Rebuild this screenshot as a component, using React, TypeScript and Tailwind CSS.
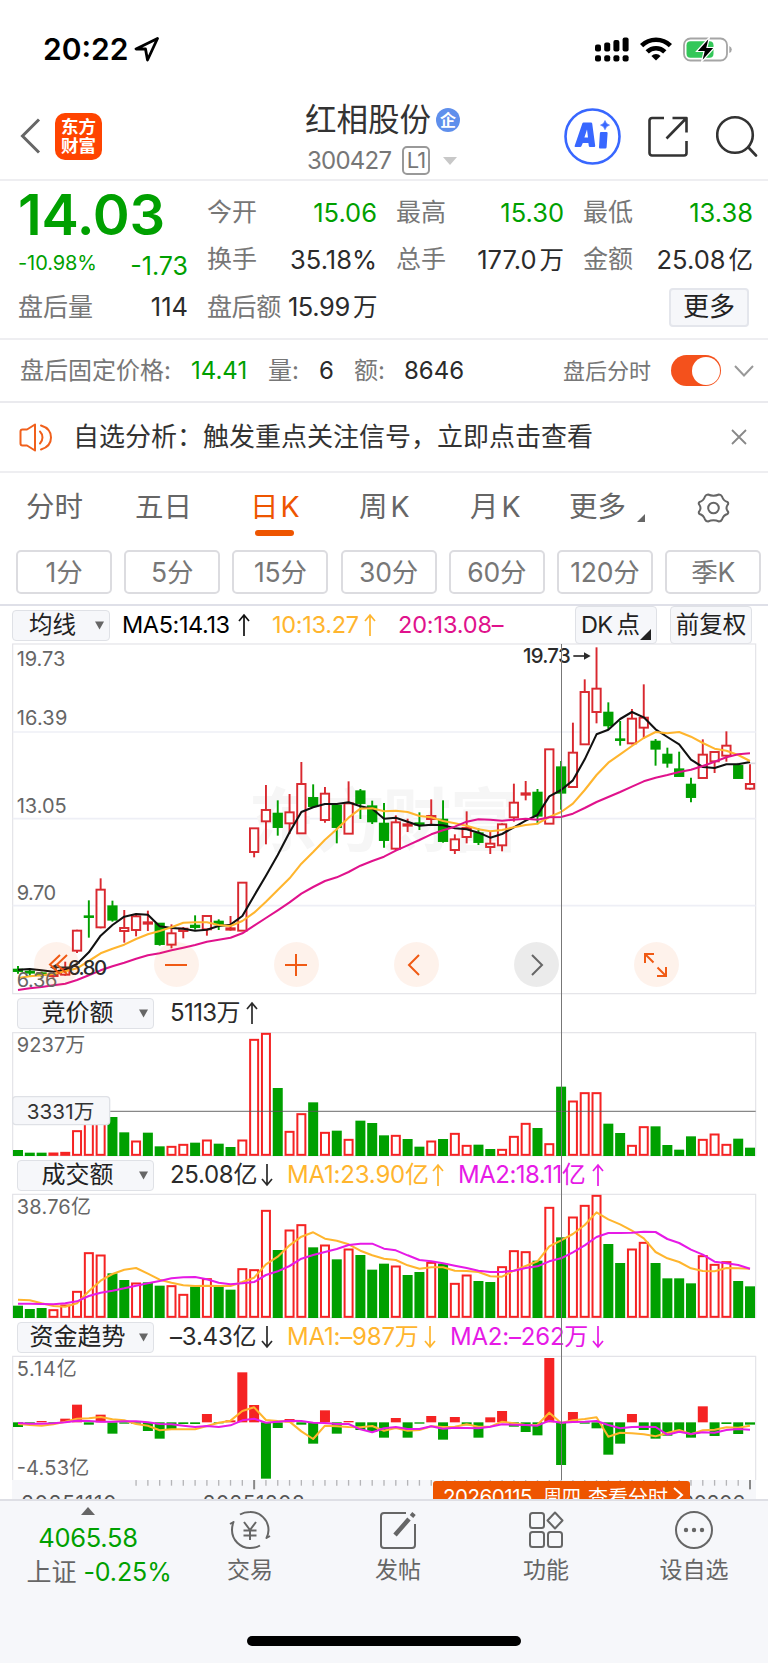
import React from "react";

const GREEN = "#00a000";
const CANDLE_RED = "#d9282f";
const BAR_RED = "#f52323";
const YELLOW = "#ffb52e";
const PINK = "#e0128c";
const MAGENTA = "#e61ae6";

// chart units are thirds of a pixel
const STEP = 35.42;
const xAt = (i: number) => 54 + i * STEP;

type Dir = "r" | "g";
// direction, body top, body bottom, high, low
type Candle = [Dir, number, number, number, number];

const candles: Candle[] = [
  ["g", 1003, 1009, 993, 1016], ["g", 1009, 1014, 1002, 1022], ["g", 1014, 1020, 1010, 1027],
  ["r", 1018, 1024, 1010, 1028], ["r", 1001, 1020, 980, 1022], ["r", 886, 948, 884, 954],
  ["g", 843, 847, 796, 908], ["r", 763, 878, 730, 880], ["g", 813, 855, 797, 860],
  ["r", 878, 889, 825, 923], ["r", 843, 886, 840, 904], ["r", 861, 867, 827, 888],
  ["g", 865, 928, 864, 932], ["r", 894, 930, 868, 940], ["r", 880, 889, 876, 910],
  ["g", 871, 877, 841, 884], ["r", 842, 884, 842, 902], ["g", 859, 869, 853, 885],
  ["r", 879, 885, 843, 887], ["r", 742, 888, 742, 888], ["r", 579, 652, 579, 667],
  ["r", 524, 560, 450, 628], ["g", 535, 577, 496, 602], ["r", 531, 566, 477, 597],
  ["r", 446, 596, 381, 596], ["g", 488, 514, 448, 516], ["r", 475, 556, 456, 563],
  ["g", 511, 577, 509, 625], ["r", 504, 597, 439, 597], ["g", 468, 505, 462, 552],
  ["g", 513, 560, 497, 567], ["g", 565, 616, 504, 638], ["r", 561, 642, 541, 648],
  ["r", 567, 573, 551, 591], ["g", 564, 570, 532, 585], ["r", 542, 553, 493, 568],
  ["g", 553, 619, 496, 623], ["r", 612, 646, 598, 657], ["r", 578, 607, 529, 625],
  ["g", 594, 622, 580, 630], ["r", 625, 637, 590, 657], ["r", 567, 632, 565, 649],
  ["r", 502, 548, 446, 560], ["r", 474, 480, 438, 496], ["g", 472, 543, 462, 568],
  ["r", 342, 567, 342, 567], ["g", 396, 474, 378, 524], ["r", 352, 457, 263, 458],
  ["r", 170, 329, 133, 330], ["r", 160, 232, 37, 265], ["g", 232, 272, 202, 282],
  ["g", 312, 316, 258, 332], ["r", 250, 326, 222, 328], ["r", 247, 279, 148, 311],
  ["g", 319, 342, 312, 392], ["g", 358, 384, 338, 398], ["g", 402, 424, 350, 425],
  ["g", 448, 487, 428, 502], ["r", 358, 430, 313, 430], ["r", 350, 380, 350, 414],
  ["r", 331, 363, 289, 380], ["g", 392, 430, 386, 431], ["r", 446, 462, 388, 464],
];

const ma5 = [
  1004, 1002, 1006, 1010, 1004, 987, 952, 902, 870, 845, 837, 839, 874, 879, 881, 887, 884, 873, 869,
  843, 782, 722, 660, 592, 531, 517, 507, 507, 502, 514, 521, 551, 548, 560, 572, 569, 571, 580, 583,
  593, 608, 597, 577, 557, 540, 484, 465, 436, 373, 298, 284, 252, 231, 247, 283, 306, 328, 374, 396,
  399, 388, 388, 381,
];
const ma10 = [
  1029, 1024, 1021, 1017, 1009, 1000, 978, 955, 941, 929, 912, 898, 888, 877, 863, 862, 862, 870, 873,
  858, 833, 800, 765, 730, 686, 651, 614, 583, 548, 521, 520, 529, 527, 531, 543, 547, 558, 565, 572,
  583, 589, 585, 577, 570, 566, 546, 531, 506, 465, 420, 383, 358, 333, 309, 291, 295, 291, 305, 324,
  341, 347, 360, 378,
];
const ma20 = [
  1065, 1060, 1056, 1051, 1046, 1035, 1021, 1006, 994, 983, 971, 961, 955, 946, 938, 930, 920, 914, 908,
  895, 872, 849, 826, 802, 776, 756, 738, 727, 711, 692, 678, 665, 647, 631, 615, 598, 586, 575, 560,
  553, 554, 557, 554, 551, 554, 547, 546, 536, 519, 501, 486, 471, 455, 439, 428, 420, 411, 404, 393,
  380, 367, 358, 355,
];

const dirs = "gggrrrrrggrggrrgrggrrrgrrgrgrggg" + "rggrgrrggrrrgrgrrrggrrggggrrrgg";

const auction = [
  481, 489, 489, 489, 487, 422, 370, 350, 382, 428, 453, 429, 470, 469, 463, 459, 450, 462, 472, 450, 148,
  130, 295, 424, 371, 338, 427, 423, 448, 393, 400, 437, 436, 448, 471, 453, 448, 430, 466, 465, 478, 478,
  439, 400, 415, 461, 291, 333, 308, 308, 402, 430, 466, 410, 410, 466, 480, 440, 448, 432, 463, 447, 474,
];

const turnover = [
  948, 958, 955, 959, 945, 904, 788, 795, 851, 871, 879, 878, 888, 887, 913, 891, 866, 891, 900, 836, 839,
  661, 781, 720, 704, 773, 765, 809, 777, 796, 840, 822, 828, 856, 847, 817, 822, 880, 855, 874, 877, 830,
  782, 785, 813, 652, 743, 681, 646, 616, 763, 820, 777, 757, 820, 866, 866, 881, 797, 823, 815, 874, 890,
];
const turnoverMa1 = [
  929, 931, 940, 948, 950, 940, 904, 872, 852, 839, 834, 851, 869, 878, 886, 888, 887, 888, 888, 876, 863,
  823, 800, 766, 740, 727, 746, 752, 763, 782, 796, 806, 810, 826, 836, 832, 832, 842, 843, 846, 859, 860,
  842, 828, 814, 769, 751, 732, 705, 667, 688, 703, 722, 745, 786, 805, 816, 835, 843, 844, 834, 835, 836,
];
const turnoverMa2 = [
  941, 941, 942, 943, 940, 934, 918, 908, 902, 895, 887, 880, 873, 865, 862, 861, 868, 878, 883, 880, 876,
  855, 844, 828, 806, 795, 786, 777, 765, 761, 761, 776, 781, 796, 810, 814, 820, 827, 834, 842, 846, 846,
  842, 834, 829, 814, 805, 787, 766, 741, 729, 729, 728, 725, 726, 747, 759, 779, 794, 815, 820, 825, 836,
];

const ZERO = 307;
const flow = [
  321, 310, 303, 310, 296, 254, 314, 284, 341, 311, 311, 333, 356, 328, 312, 312, 282, 310, 301, 157, 255,
  476, 324, 297, 314, 371, 271, 341, 303, 330, 335, 353, 294, 353, 311, 288, 359, 291, 316, 353, 292, 273,
  320, 336, 346, 114, 435, 276, 311, 325, 404, 371, 282, 330, 356, 347, 335, 353, 259, 348, 312, 342, 314,
];
const flowMa1 = [
  312, 315, 317, 313, 305, 296, 295, 291, 298, 301, 312, 317, 331, 328, 328, 328, 318, 308, 302, 273, 262,
  300, 303, 305, 334, 357, 317, 319, 321, 322, 318, 332, 324, 332, 330, 319, 321, 320, 313, 320, 320, 305,
  310, 315, 314, 278, 309, 301, 297, 292, 350, 338, 340, 343, 349, 339, 330, 343, 331, 329, 322, 323, 317,
];
const flowMa2 = [
  309, 311, 311, 310, 307, 302, 303, 305, 305, 304, 304, 307, 312, 313, 317, 321, 318, 321, 316, 301, 296,
  308, 305, 302, 303, 308, 309, 312, 312, 328, 337, 325, 321, 327, 327, 319, 326, 323, 324, 325, 320, 313,
  314, 315, 317, 302, 308, 306, 305, 303, 315, 325, 321, 320, 321, 344, 335, 342, 337, 338, 330, 327, 329,
];

const Line = ({ data, color }: { data: number[]; color: string }) => (
  <polyline
    points={data.map((y, i) => `${xAt(i).toFixed(1)},${y}`).join(" ")}
    fill="none"
    stroke={color}
    strokeWidth={6.2}
    strokeLinejoin="round"
  />
);

const Label = ({ x = 50, y, w, children, color = "#666" }: { x?: number; y: number; w: number; children: string; color?: string }) => (
  <text x={x} y={y} textLength={w} fontSize={60} fill={color}>
    {children}
  </text>
);

function Bars({ data, base }: { data: number[]; base: number }) {
  return (
    <g>
      {data.map((y, i) =>
        dirs[i] === "g" ? (
          <rect key={i} x={xAt(i) - 15} y={y - 1} width={30} height={base - y + 2} fill={GREEN} />
        ) : (
          <rect
            key={i}
            x={xAt(i) - 12}
            y={y + 1.5}
            width={24}
            height={Math.max(base - y - 4, 3)}
            fill="#fff"
            stroke={BAR_RED}
            strokeWidth={6}
          />
        )
      )}
    </g>
  );
}

const Frame = ({ y, h }: { y: number; h: number }) => (
  <rect x={38} y={y} width={2229} height={h} fill="none" stroke="#e3e3e8" strokeWidth={3.5} />
);

function Plot({ top, height, children }: { top: number; height: number; children: React.ReactNode }) {
  return (
    <svg
      width={768}
      height={height}
      viewBox={`0 ${top} 2304 ${height * 3}`}
      className="block shrink-0 overflow-visible"
    >
      {children}
    </svg>
  );
}

function PriceChart() {
  return (
    <Plot top={27} height={350}>
      <Frame y={27} h={1049} />
      {[291, 551, 812].map((y) => (
        <line key={y} x1={38} x2={2267} y1={y} y2={y} stroke="#eeeff6" strokeWidth={5} />
      ))}
      <text
        x={745}
        y={634}
        textLength={812}
        fontSize={208}
        fontWeight={700}
        fill="#f6f6f6"
      >
        东方财富
      </text>
      <line x1={2210} x2={2267} y1={385} y2={385} stroke="#dcdce2" strokeWidth={5} />
      <Label y={92} w={146}>19.73</Label>
      <Label y={270} w={152}>16.39</Label>
      <Label y={533} w={150}>13.05</Label>
      <Label y={795} w={118}>9.70</Label>
      {candles.map(([d, top, bottom, high, low], i) => {
        const x = xAt(i);
        const color = d === "g" ? GREEN : CANDLE_RED;
        return (
          <g key={i} stroke={color} strokeWidth={5.8}>
            <line x1={x} x2={x} y1={high} y2={top} />
            <line x1={x} x2={x} y1={bottom} y2={low} />
            <rect
              x={x - 12.5}
              y={top + 1}
              width={25}
              height={Math.max(bottom - top - 2, 1)}
              fill={d === "g" ? GREEN : "#fff"}
            />
          </g>
        );
      })}
      <Line data={ma5} color="#111" />
      <Line data={ma10} color={YELLOW} />
      <Line data={ma20} color={PINK} />
      <Label y={1056} w={122}>6.36</Label>
      <g fill="#2b2b2b" stroke="none" fontWeight={500}>
        <text x={1569} y={84} textLength={143} fontSize={61}>19.73</text>
        <text x={204} y={1019} textLength={117} fontSize={61}>6.80</text>
        <path d="M1720 63h38" stroke="#2b2b2b" strokeWidth={5} />
        <path d="M1752 52l20 11-20 11z" />
        <path d="M165 997h42" stroke="#2b2b2b" strokeWidth={5} />
        <path d="M170 986l-20 11 20 11z" />
      </g>
    </Plot>
  );
}

function AuctionChart() {
  return (
    <Plot top={126} height={124}>
      <Frame y={128} h={369} />
      <Label y={186} w={206}>9237万</Label>
      <Bars data={auction} base={497} />
      <line x1={38} x2={2267} y1={364} y2={364} stroke="#555" strokeOpacity={0.7} strokeWidth={4} />
      <rect x={38} y={320} width={291} height={84} rx={10} fill="#f6f7fa" stroke="#dfe1e6" strokeWidth={4} />
      <text x={80} y={386} textLength={203} fontSize={62} fill="#333">3331万</text>
    </Plot>
  );
}

function TurnoverChart() {
  return (
    <Plot top={612} height={124}>
      <Frame y={613} h={370} />
      <Label y={672} w={223}>38.76亿</Label>
      <Bars data={turnover} base={983} />
      <Line data={turnoverMa1} color={YELLOW} />
      <Line data={turnoverMa2} color={MAGENTA} />
    </Plot>
  );
}

function FlowChart() {
  return (
    <Plot top={108} height={124}>
      <path d="M38 480V109H2267V480" fill="none" stroke="#e3e3e8" strokeWidth={3.5} />
      <Label y={169} w={180}>5.14亿</Label>
      <Label y={466} w={218}>-4.53亿</Label>
      {flow.map((y, i) => (
        <rect
          key={i}
          x={xAt(i) - 15}
          y={Math.min(y, ZERO)}
          width={30}
          height={Math.max(Math.abs(y - ZERO), 3)}
          fill={y < ZERO ? BAR_RED : GREEN}
        />
      ))}
      <Line data={flowMa1} color={YELLOW} />
      <Line data={flowMa2} color={MAGENTA} />
    </Plot>
  );
}

function TimeAxis() {
  const ticks = Array.from({ length: 53 }, (_, k) => k + 10);
  return (
    <div className="relative h-[19px] overflow-hidden">
      <svg width={768} height={19} viewBox="0 0 2304 57" className="block">
        <rect x={36} y={0} width={2232} height={57} fill="#f6f7fa" />
        {ticks.map((i) => {
          const major = i === 20 || i === 62;
          return (
            <line
              key={i}
              x1={xAt(i)}
              x2={xAt(i)}
              y1={0}
              y2={major ? 28 : 17}
              stroke={major ? "#888" : "#b5b5b8"}
              strokeWidth={major ? 6 : 4}
            />
          );
        })}
        <g fontSize={62} fill="#555">
          <text x={64} y={91} textLength={285}>20251110</text>
          <text x={608} y={91} textLength={306}>20251208</text>
          <text x={1929} y={91} textLength={306}>20260206</text>
        </g>
      </svg>
      <div className="absolute left-[433px] top-[1px] flex h-[32px] w-[257px] items-center rounded-[3px] bg-[#ee5500] pl-[10px] text-[20.5px] leading-none whitespace-nowrap text-white">
        <span className="w-[100px] tracking-[-0.45px]">20260115</span>
        <span className="w-[45px] pt-[1px] text-[19px]">周四</span>
        <span className="pt-[1px] text-[20px]">查看分时</span>
        <svg width="12" height="18" viewBox="0 0 12 18" className="ml-[4px] mb-[5px]" fill="none" stroke="#fff" strokeWidth="2">
          <path d="M2 2l8 7-8 7" />
        </svg>
      </div>
    </div>
  );
}

const Caret = () => (
  <svg width="9" height="9" viewBox="0 0 9 9">
    <path d="M0 .5h9L4.500 8.500z" fill="#666" />
  </svg>
);

interface PanelProps {
  name: string;
  values: { text: string; arrow: string; color: string; width: string; textWidth: string }[];
}

function Arrow({ dir, color }: { dir: string; color: string }) {
  if (dir === "") return null;
  return (
    <svg
      width="12"
      height="24"
      viewBox="0 0 12 24"
      fill="none"
      stroke={color}
      strokeWidth="1.700"
      className={dir === "up" ? "" : "rotate-180"}
    >
      <path d="M6 23V2M1 8l5-6 5 6" />
    </svg>
  );
}

function PanelHeader({ name, values }: PanelProps) {
  return (
    <div className="flex h-[38px] items-center pl-[17px]">
      <div className="flex h-[31px] w-[137px] items-center rounded-[4px] border border-[#dfe1e6] bg-[#f6f7fa] pr-[5px]">
        <span className="mr-[-9px] flex-1 pr-[11px] text-center text-[24px] leading-none whitespace-nowrap text-[#222]">
          {name}
        </span>
        <Caret />
      </div>
      <div className="ml-[16px] flex text-[24px] leading-none whitespace-nowrap">
        {values.map((v) => (
          <div key={v.text} className={`flex items-center ${v.width}`} style={{ color: v.color }}>
            <span className={v.textWidth}>{v.text}</span>
            <Arrow dir={v.arrow} color={v.color} />
          </div>
        ))}
      </div>
    </div>
  );
}

const floatBase = "flex h-[45px] w-[45px] items-center justify-center rounded-full";

function FloatButtons() {
  const icons = [
    "M19 5L9 14.500l10 9.500M26 5L16 14.500l10 9.500",
    "M4 15h22",
    "M4 15h22M15 4v22",
    "M18 5L8 15l10 10",
    "M11 5l10 10-10 10",
    "M4 13V4h9M4.500 4.500l8 8M25 17v9h-9M24.500 25.500l-8-8",
  ];
  return (
    <div className="absolute left-[33.5px] top-[298px] flex gap-[75px]">
      {icons.map((d, i) => (
        <div key={d} className={`${floatBase} ${i === 4 ? "bg-black/8" : "bg-[#ee5500]/8"}`}>
          <svg width="30" height="30" viewBox="0 0 30 30" fill="none" stroke={i === 4 ? "#666" : "#f05a14"} strokeWidth="2">
            <path d={d} />
          </svg>
        </div>
      ))}
    </div>
  );
}

function StatusBar() {
  return (
    <div className="flex h-[98px] items-center justify-between pl-[43px] pr-[36px]">
      <div className="flex items-center gap-[6px]">
        <span className="text-[30px] leading-none font-semibold text-black">20:22</span>
        <svg width="26" height="25" viewBox="0 0 26 25" fill="none" stroke="#000" strokeWidth="2.800" strokeLinejoin="round">
          <path d="M23.500 1.500L2 12h9.500l2 11z" />
        </svg>
      </div>
      <div className="flex items-center">
        <svg width="35" height="25" viewBox="0 0 35 25" fill="#000">
          {[0, 1, 2, 3].map((i) => (
            <g key={i}>
              <rect x={i * 9.2} y={[7.5, 5.5, 3, 0.5][i]} width="6" height={[7, 9, 11.5, 14][i]} rx="2" />
              <rect x={i * 9.2} y="18.300" width="6" height="6.200" rx="2" />
            </g>
          ))}
        </svg>
        <svg width="32" height="24" viewBox="0 0 32 24" className="ml-[10px]" fill="none" stroke="#000" strokeWidth="4.600">
          <path d="M1.600 8.600a20.500 20.500 0 0 1 28.800 0" />
          <path d="M7.200 14.800a12.500 12.500 0 0 1 17.600 0" />
          <path d="M16 23.500l-4.600-4.600a6.500 6.500 0 0 1 9.200 0z" fill="#000" stroke="none" />
        </svg>
        <svg width="49" height="25" viewBox="0 0 49 25" className="ml-[11px]">
          <rect x="1" y="1.500" width="43" height="22" rx="6.500" fill="#fff" stroke="#a5a5a5" strokeWidth="1.800" />
          <rect x="3.500" y="4.300" width="27" height="16.400" rx="4" fill="#34c759" />
          <path d="M46.300 9v7q2.500-1 2.500-3.500t-2.500-3.500z" fill="#a5a5a5" />
          <path d="M26.500 0L13.500 14.500h7.500L18.500 25 31.500 10.500h-7.500z" fill="#000" stroke="#fff" strokeWidth="1.200" />
        </svg>
      </div>
    </div>
  );
}

function TopBar() {
  return (
    <div className="flex h-[83px] border-b-2 border-[#eeeef1] pt-[3px]">
      <div className="flex w-[305px] items-center pl-[20px] pb-[8px]">
        <svg width="21" height="36" viewBox="0 0 21 36" fill="none" stroke="#666" strokeWidth="3">
          <path d="M19 1.500L2.500 18 19 34.500" />
        </svg>
        <div className="ml-[14px] flex h-[47px] w-[47px] flex-col items-center justify-center rounded-[10px] bg-[#ff4400] text-[17.5px] leading-[19.5px] font-bold text-white">
          <span>东方</span>
          <span>财富</span>
        </div>
      </div>
      <div className="flex w-[259px] flex-col">
        <div className="flex h-[39px] items-center">
          <span className="text-[31.5px] leading-none text-[#333]">红相股份</span>
          <span className="ml-[5px] flex h-[24px] w-[24px] items-center justify-center rounded-full bg-[#5f8fec] text-[16px] font-bold leading-none text-white">
            企
          </span>
        </div>
        <div className="flex h-[41px] items-start pt-[7px]">
          <span className="w-[94px] pl-[2px] pt-[3px] text-[24px] leading-none tracking-[-0.75px] text-[#777]">300427</span>
          <span className="ml-[3px] flex h-[29px] w-[28px] items-center justify-center rounded-[5px] border-2 border-[#999] text-[22px] leading-none tracking-[-1px] text-[#777]">
            L1
          </span>
          <svg width="14" height="8" viewBox="0 0 14 8" className="ml-[13px] mt-[11px]">
            <path d="M0 0h14L7 8z" fill="#c8c8c8" />
          </svg>
        </div>
      </div>
      <div className="flex items-center pb-[8px]">
        <svg width="57" height="57" viewBox="0 0 57 57">
          <circle cx="28.500" cy="28.500" r="27" fill="none" stroke="#3867ff" strokeWidth="2.600" />
          <path
            d="M19.500 14.500H27q1 0 1.200 1l3 22.300q.1 1.200-1 1.200h-4.200q-1 0-1.200-1l-.4-3h-5.600l-1.400 3.200q-.4.8-1.200.8H11.500q-1.300 0-.8-1.200l7.700-22.500q.3-.8 1.100-.8zM23 21.500l-2.600 8h3.600z"
            fill="#3867ff"
            fillRule="evenodd"
          />
          <path d="M37 24h5.500q1.200 0 1.100 1.200l-1 14q-.1 1.300-1.300 1.300h-5.200q-1.200 0-1.100-1.300l.9-14q.1-1.200 1.100-1.200z" fill="#3867ff" />
          <path d="M41 12.500q1 3.700 4.500 4.600-3.500.9-4.500 4.600-1-3.700-4.500-4.600 3.500-.9 4.500-4.600z" fill="#3867ff" stroke="#3867ff" strokeWidth=".6" />
        </svg>
        <svg width="42" height="42" viewBox="0 0 42 42" className="ml-[26px]" fill="none" stroke="#333" strokeWidth="2.600" strokeLinejoin="round">
          <path d="M17 3H5a2.500 2.500 0 0 0-2.500 2.500V38A2.500 2.500 0 0 0 5 40.500h32a2.500 2.500 0 0 0 2.500-2.500V26" />
          <path d="M25.500 3H39.500V17.500M39 3.500L19.500 23.500" />
        </svg>
        <svg width="42" height="42" viewBox="0 0 42 42" className="ml-[27px]" fill="none" stroke="#333" strokeWidth="2.600" strokeLinecap="round">
          <circle cx="19" cy="20" r="17.800" />
          <path d="M32.500 32.500l7.500 8" />
        </svg>
      </div>
    </div>
  );
}

interface StatProps {
  label: string;
  value: string;
  unit?: string;
  color?: string;
}

const Stat = ({ label, value, unit, color = "text-[#2b2b2b]" }: StatProps) => (
  <div className="flex items-center justify-between text-[25.5px] leading-none whitespace-nowrap">
    <span className="w-0 text-[25px] text-[#777]">{label}</span>
    <span className={color}>
      {value}
      {unit && <span className="ml-[3px] text-[24.5px]">{unit}</span>}
    </span>
  </div>
);

function Quote() {
  return (
    <div className="grid h-[159px] grid-cols-[170px_170px_168px_170px] gap-x-[19px] border-b-2 border-[#eeeef1] pl-[18px]">
      <div className="flex flex-col text-[#00a000]">
        <div className="flex h-[65px] items-center pt-[3px] text-[56px] leading-none font-semibold tracking-[-0.2px]">
          14.03
        </div>
        <div className="flex h-[38px] items-center justify-between leading-none">
          <span className="pb-[4px] text-[20px] tracking-[-0.1px]">-10.98%</span>
          <span className="pt-[3px] text-[25px]">-1.73</span>
        </div>
        <div className="grid h-[46px]">
          <Stat label="盘后量" value="114" />
        </div>
      </div>
      <div className="grid grid-rows-[47px_47px_48px] content-start pt-[8px]">
        <Stat label="今开" value="15.06" color="text-[#00a000]" />
        <Stat label="换手" value="35.18%" />
        <div className="grid tracking-[-0.4px]">
          <Stat label="盘后额" value="15.99" unit="万" />
        </div>
      </div>
      <div className="grid grid-rows-[47px_47px_48px] content-start pt-[8px]">
        <Stat label="最高" value="15.30" color="text-[#00a000]" />
        <Stat label="总手" value="177.0" unit="万" />
      </div>
      <div className="grid grid-rows-[47px_47px_48px] content-start pt-[8px]">
        <Stat label="最低" value="13.38" color="text-[#00a000]" />
        <Stat label="金额" value="25.08" unit="亿" />
        <div className="mr-[4px] flex h-[39px] w-[80px] items-center justify-center self-center justify-self-end rounded-[4px] border-2 border-[#e4e6ec] bg-[#f6f7fa] text-[26px] leading-none text-[#222]">
          更多
        </div>
      </div>
    </div>
  );
}

function AfterHours() {
  return (
    <div className="flex h-[63px] items-center border-b-2 border-[#eaeaee] pl-[20px] text-[24px] leading-none whitespace-nowrap text-[#777]">
      <span className="w-[171px]">盘后固定价格:</span>
      <span className="w-[77px] text-[#00a000]">14.41</span>
      <span className="w-[51px]">量:</span>
      <span className="w-[35px] text-[#2b2b2b]">6</span>
      <span className="w-[50px]">额:</span>
      <span className="w-[159px] text-[#2b2b2b]">8646</span>
      <span className="w-[108px] text-[22px]">盘后分时</span>
      <span className="flex h-[31px] w-[50px] items-center justify-end rounded-full bg-[#f4511c] pr-[1px]">
        <span className="h-[28px] w-[28px] rounded-full bg-white" />
      </span>
      <svg width="20" height="12" viewBox="0 0 20 12" className="ml-[13px]" fill="none" stroke="#999" strokeWidth="2">
        <path d="M1 1l9 9.500L19 1" />
      </svg>
    </div>
  );
}

function Notice() {
  return (
    <div className="flex h-[70px] items-center border-b-2 border-[#eeeef1] pl-[19px]">
      <svg width="34" height="29" viewBox="0 0 34 29" fill="none" stroke="#f0601c" strokeWidth="2" strokeLinejoin="round" strokeLinecap="round">
        <path d="M16 1.500L8 6.500H3.500a2 2 0 0 0-2 2v12a2 2 0 0 0 2 2H8l8 5z" />
        <path d="M21 8.500a8.500 8.500 0 0 1 0 12M22 2.500q10 3 10 12t-10 12" />
      </svg>
      <span className="ml-[20px] text-[26px] leading-none whitespace-nowrap text-[#333]">
        自选分析：触发重点关注信号，立即点击查看
      </span>
      <svg width="16" height="16" viewBox="0 0 16 16" className="ml-[138px]" fill="none" stroke="#888" strokeWidth="1.800">
        <path d="M1 1l14 14M15 1L1 15" />
      </svg>
    </div>
  );
}

function Tabs() {
  return (
    <div className="flex h-[69px] items-center pl-[26px] text-[28.5px] leading-none whitespace-nowrap text-[#666]">
      <span className="w-[109px]">分时</span>
      <span className="w-[115px]">五日</span>
      <div className="relative w-[109px] text-[#ee5500]">
        日<span className="ml-[2px]">K</span>
        <div className="absolute left-[5px] top-[37px] h-[6px] w-[39px] rounded-[3px] bg-[#ee5500]" />
      </div>
      <span className="w-[111px]">
        周<span className="ml-[3px]">K</span>
      </span>
      <span className="w-[99px]">
        月<span className="ml-[3px]">K</span>
      </span>
      <span>更多</span>
      <svg width="8" height="8" viewBox="0 0 8 8" className="ml-[11px] mt-[20px]">
        <path d="M8 0v8H0z" fill="#666" />
      </svg>
      <svg width="33" height="30" viewBox="0 0 33 30" className="ml-[52px]" fill="none" stroke="#666" strokeWidth="2" strokeLinejoin="round">
        <path d="M11 1.500q5.500 2.500 11 0 2 0 3 2 1.500 4.500 5.500 5.500 1.500 1.500 0 3-2 3 0 6 1.500 1.500 0 3-4 1-5.500 5.500-1 2-3 2-5.500-2.500-11 0-2 0-3-2-1.500-4.500-5.500-5.500-1.500-1.500 0-3 2-3 0-6-1.500-1.500 0-3 4-1 5.500-5.500 1-2 3-2z" />
        <circle cx="16.500" cy="15" r="5.300" />
      </svg>
    </div>
  );
}

function Periods() {
  const periods = ["1分", "5分", "15分", "30分", "60分", "120分", "季K"];
  return (
    <div className="flex h-[64px] gap-[12.2px] border-b-2 border-[#dfe0e8] pl-[16px] pt-[8px]">
      {periods.map((p) => (
        <div
          key={p}
          className="flex h-[44px] w-[96px] items-center justify-center rounded-[5px] border-2 border-[#dcdce0] text-[26.5px] leading-none tracking-[-0.2px] text-[#777]"
        >
          {p}
        </div>
      ))}
    </div>
  );
}

function MaHeader() {
  return (
    <div className="flex h-[38px] items-center pl-[12px] text-[23.5px] leading-none whitespace-nowrap">
      <div className="flex h-[31px] w-[98px] items-center rounded-[4px] border border-[#dfe1e6] bg-[#f6f7fa] pr-[5px] text-[#222]">
        <span className="flex-1 pl-[16px]">均线</span>
        <Caret />
      </div>
      <div className="ml-[12px] flex w-[150px] items-center text-black">
        <span className="w-[116px] tracking-[-0.4px]">MA5:14.13</span>
        <Arrow dir="up" color="#111" />
      </div>
      <div className="flex w-[126px] items-center text-[#ffb52e]">
        <span className="w-[92px] tracking-[-0.3px]">10:13.27</span>
        <Arrow dir="up" color={YELLOW} />
      </div>
      <span className="w-[177px] tracking-[-0.15px] text-[#e0128c]">20:13.08–</span>
      <div className="relative flex h-[38px] w-[82px] items-center rounded-[4px] border border-[#dfe1e6] bg-[#f6f7fa] pl-[5px] text-[#222]">
        <span className="tracking-[-0.6px]">DK</span>
        <span className="ml-[4px]">点</span>
        <svg width="11" height="11" viewBox="0 0 11 11" className="absolute right-[5px] bottom-[3px]">
          <path d="M11 0v11H0z" fill="#222" />
        </svg>
      </div>
      <div className="ml-[13px] flex h-[38px] w-[82px] items-center justify-center rounded-[4px] border border-[#dfe1e6] bg-[#f6f7fa] text-[#222]">
        前复权
      </div>
    </div>
  );
}

function Charts() {
  return (
    <div className="relative">
      <PriceChart />
      <PanelHeader
        name="竞价额"
        values={[{ text: "5113万", arrow: "up", color: "#2b2b2b", width: "w-[110px]", textWidth: "w-[76px] tracking-[-0.6px]" }]}
      />
      <AuctionChart />
      <PanelHeader
        name="成交额"
        values={[
          { text: "25.08亿", arrow: "down", color: "#2b2b2b", width: "w-[117px]", textWidth: "w-[91px] tracking-[-0.3px]" },
          { text: "MA1:23.90亿", arrow: "up", color: YELLOW, width: "w-[171px]", textWidth: "w-[145px] tracking-[-0.2px]" },
          { text: "MA2:18.11亿", arrow: "up", color: MAGENTA, width: "w-[160px]", textWidth: "w-[134px] tracking-[-0.5px]" },
        ]}
      />
      <TurnoverChart />
      <PanelHeader
        name="资金趋势"
        values={[
          { text: "–3.43亿", arrow: "down", color: "#2b2b2b", width: "w-[117px]", textWidth: "w-[91px] tracking-[-0.2px]" },
          { text: "MA1:–987万", arrow: "down", color: YELLOW, width: "w-[163px]", textWidth: "w-[137px] tracking-[-0.2px]" },
          { text: "MA2:–262万", arrow: "down", color: MAGENTA, width: "w-[160px]", textWidth: "w-[142px] tracking-[-0.2px]" },
        ]}
      />
      <FlowChart />
      {/* crosshair */}
      <div className="absolute left-[561px] top-0 h-full w-px bg-[#777]" />
      <FloatButtons />
    </div>
  );
}

const NavItem = ({ label, children }: { label: string; children: React.ReactNode }) => (
  <div className="flex w-[148px] flex-col items-center pt-[9px]">
    <svg width="42" height="40" viewBox="0 0 42 40" fill="none" stroke="#666" strokeWidth="2" strokeLinejoin="round">
      {children}
    </svg>
    <span className="mt-[9px] text-[23px] leading-none text-[#666]">{label}</span>
  </div>
);

function BottomNav() {
  return (
    <div className="relative flex h-[164px] border-t-2 border-[#dedfe5] bg-[#f6f7fa]">
      <div className="flex w-[176px] flex-col items-center pt-[6px] text-[25px] leading-none">
        <svg width="14" height="8" viewBox="0 0 14 8">
          <path d="M0 8h14L7 0z" fill="#666" />
        </svg>
        <span className="mt-[10px] text-[25.5px] tracking-[-0.3px] text-[#00a000]">4065.58</span>
        <div className="mt-[9px] flex items-center pl-[22px] whitespace-nowrap">
          <span className="text-[#666]">上证</span>
          <span className="ml-[7px] tracking-[-0.1px] text-[#00a000]">-0.25%</span>
        </div>
      </div>
      <NavItem label="交易">
        <path d="M11 4.500Q15 2 21 2a18 18 0 0 1 18.500 18q0 4-2 8l3.500-2M31 35.500Q27 38 21 38A18 18 0 0 1 3 20q0-4 1.500-8L1 14" />
        <path d="M15 12l6 8 6-8M21 20v10M14.500 20.500h13M14.500 25.500h13" />
      </NavItem>
      <NavItem label="发帖">
        <path d="M29 3H7a3 3 0 0 0-3 3v29a3 3 0 0 0 3 3h28a3 3 0 0 0 3-3V14" />
        <path d="M18 25L32 9M34.500 6.500L37 3.500" strokeWidth="4.500" />
      </NavItem>
      <NavItem label="功能">
        <rect x="5" y="3" width="14" height="15" rx="2.500" />
        <rect x="5" y="22" width="14" height="15" rx="2.500" />
        <rect x="23" y="22" width="14" height="15" rx="2.500" />
        <path d="M30 2.500l7.500 8L30 18.500l-7.500-8z" />
      </NavItem>
      <NavItem label="设自选">
        <circle cx="21" cy="20" r="18" />
        <g fill="#666" stroke="none">
          <circle cx="13" cy="20" r="2.200" />
          <circle cx="21" cy="20" r="2.200" />
          <circle cx="29" cy="20" r="2.200" />
        </g>
      </NavItem>
      <div className="absolute bottom-[17px] left-[247px] h-[10px] w-[274px] rounded-full bg-black" />
    </div>
  );
}

export default function App() {
  return (
    <div className="h-[1663px] w-[768px] overflow-hidden bg-white font-[Inter,'Noto_Sans_CJK_SC',sans-serif]">
      <StatusBar />
      <TopBar />
      <Quote />
      <AfterHours />
      <Notice />
      <Tabs />
      <Periods />
      <MaHeader />
      <Charts />
      <TimeAxis />
      <BottomNav />
    </div>
  );
}
